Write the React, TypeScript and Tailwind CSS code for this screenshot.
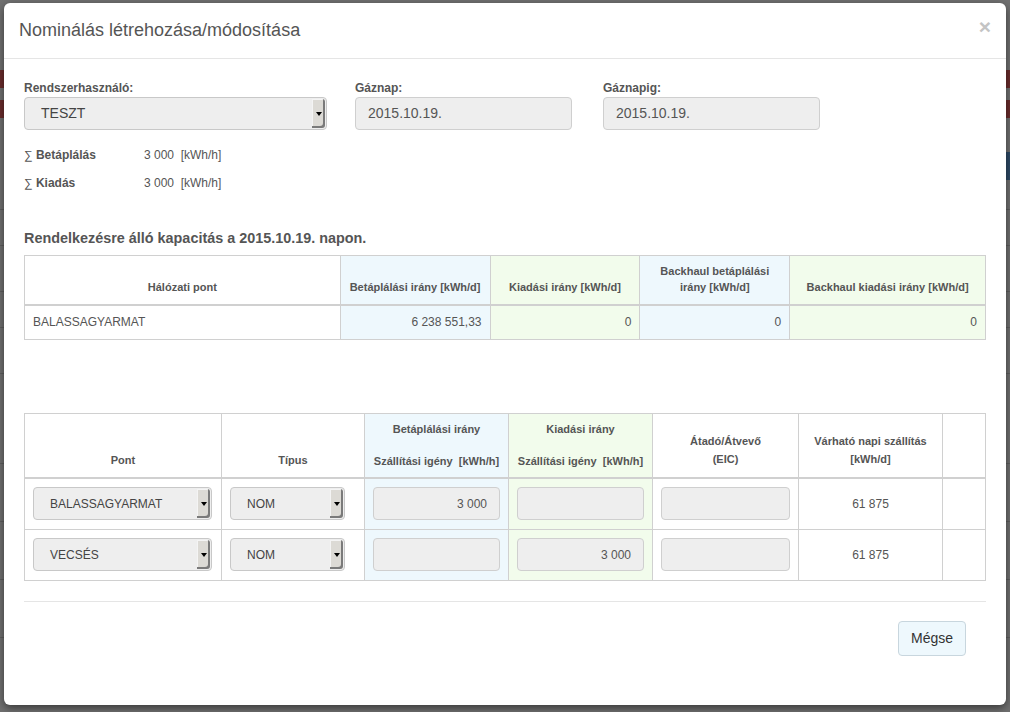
import React from "react";

const font = { fontFamily: '"Liberation Sans", Arial, sans-serif' };

const Arrow = () => (
  <span className="my-[1px] mr-[1px] flex w-[13px] items-center justify-center rounded-r-[3px] bg-[#dcdad5] shadow-[inset_-2px_-2px_0_#7a7a7a,inset_1px_1px_0_#f4f4f4]">
    <span className="h-0 w-0 border-x-[3px] border-t-[4px] border-x-transparent border-t-black" />
  </span>
);

const Select = ({ value, className, big }: { value: string; className: string; big?: boolean }) => (
  <div className={`flex h-[33px] items-stretch rounded-[4px] border border-[#c8c8c8] bg-[#eee] ${className}`}>
    <span className={`flex flex-1 items-center pl-4 text-[#444] ${big ? "text-[14px]" : "text-[12px]"}`}>{value}</span>
    <Arrow />
  </div>
);

const Input = ({ value, className }: { value?: string; className: string }) => (
  <div className={`flex h-[33px] items-center justify-end rounded-[4px] border border-[#cfcfcf] bg-[#eee] pr-3 text-[12px] text-[#555] ${className}`}>
    {value}
  </div>
);

const blue = "bg-[#eef8fd]";
const green = "bg-[#f2fcec]";
const cell = "border border-[#d0d0d0]";

const App = () => {
  const rows = [
    { pont: "BALASSAGYARMAT", be: "3 000", ki: "" },
    { pont: "VECSÉS", be: "", ki: "3 000" },
  ];

  return (
    <div className="relative h-[712px] w-[1010px] overflow-hidden bg-[#707070]" style={font}>
      {/* dimmed page behind the dialog */}
      <div className="flex flex-col">
        <div className="h-[70px]" />
        <div className="h-[18px] bg-[#6a2c2c]" />
        <div className="h-[12px]" />
        <div className="h-[18px] bg-[#6a2c2c]" />
        <div className="h-[34px]" />
        <div className="ml-auto h-[28px] w-[40px] bg-[#2e4a66]" />
        <div className="h-[30px] border-b border-[#5e5e5e]" />
        <div className="h-[36px] border-b border-[#5e5e5e]" />
        <div className="h-[46px] border-b border-[#5e5e5e]" />
        <div className="h-[36px] border-b border-[#5e5e5e]" />
        <div className="h-[46px] border-b border-[#5e5e5e]" />
        <div className="h-[90px] border-b border-[#5e5e5e]" />
        <div className="h-[58px] border-b border-[#5e5e5e]" />
        <div className="h-[58px] border-b border-[#5e5e5e]" />
        <div className="h-[58px] border-b border-[#5e5e5e]" />
      </div>

      {/* dialog */}
      <div className="absolute left-[4px] top-[3px] flex h-[702px] w-[1002px] flex-col rounded-[6px] bg-white shadow-[0_3px_9px_rgba(0,0,0,0.5)]">
        <div className="flex h-[56px] items-center justify-between border-b border-[#e5e5e5] pl-[15px] pr-[15px]">
          <h4 className="text-[18px] text-[#555]">Nominálás létrehozása/módosítása</h4>
          <span className="mb-[8px] text-[21px] font-bold leading-none text-[#c4c4c4]">×</span>
        </div>

        <div className="flex flex-1 flex-col px-[20px] pt-[21px]">
          <div className="flex">
            <div className="w-[303px]">
              <div className="mb-[1px] text-[12px] font-bold leading-[16px] text-[#555]">Rendszerhasználó:</div>
              <Select value="TESZT" className="w-[303px]" big />
            </div>
            <div className="ml-[28px] w-[217px]">
              <div className="mb-[1px] text-[12px] font-bold leading-[16px] text-[#555]">Gáznap:</div>
              <div className="flex h-[33px] items-center rounded-[4px] border border-[#cfcfcf] bg-[#eee] pl-3 text-[14px] text-[#555]">2015.10.19.</div>
            </div>
            <div className="ml-[31px] w-[217px]">
              <div className="mb-[1px] text-[12px] font-bold leading-[16px] text-[#555]">Gáznapig:</div>
              <div className="flex h-[33px] items-center rounded-[4px] border border-[#cfcfcf] bg-[#eee] pl-3 text-[14px] text-[#555]">2015.10.19.</div>
            </div>
          </div>

          <div className="mt-[17px] flex h-[16px] items-center text-[12px] text-[#555]">
            <span className="w-[120px] font-bold"><span className="font-normal">∑</span> Betáplálás</span>
            <span>3 000&nbsp;&nbsp;[kWh/h]</span>
          </div>
          <div className="mt-[12px] flex h-[16px] items-center text-[12px] text-[#555]">
            <span className="w-[120px] font-bold"><span className="font-normal">∑</span> Kiadás</span>
            <span>3 000&nbsp;&nbsp;[kWh/h]</span>
          </div>

          <h4 className="mt-[37px] text-[14.4px] font-bold text-[#555]">Rendelkezésre álló kapacitás a 2015.10.19. napon.</h4>

          <table className="mt-[5px] w-[962px] border-collapse text-[11px] text-[#555]">
            <thead>
              <tr className="h-[50px] border-b-2 border-[#d0d0d0]">
                <th className={`${cell} w-[316px] px-2 pb-[9px] align-bottom`}>Hálózati pont</th>
                <th className={`${cell} ${blue} w-[150px] px-2 pb-[9px] align-bottom`}>Betáplálási irány [kWh/d]</th>
                <th className={`${cell} ${green} w-[150px] px-2 pb-[9px] align-bottom`}>Kiadási irány [kWh/d]</th>
                <th className={`${cell} ${blue} w-[150px] px-2 pb-[9px] align-bottom leading-[16px]`}>Backhaul betáplálási irány [kWh/d]</th>
                <th className={`${cell} ${green} w-[196px] px-2 pb-[9px] align-bottom`}>Backhaul kiadási irány [kWh/d]</th>
              </tr>
            </thead>
            <tbody className="text-[12px]">
              <tr className="h-[34px]">
                <td className={`${cell} px-2`}>BALASSAGYARMAT</td>
                <td className={`${cell} ${blue} px-2 text-right`}>6 238 551,33</td>
                <td className={`${cell} ${green} px-2 text-right`}>0</td>
                <td className={`${cell} ${blue} px-2 text-right`}>0</td>
                <td className={`${cell} ${green} px-2 text-right`}>0</td>
              </tr>
            </tbody>
          </table>

          <table className="mt-[73px] w-[962px] border-collapse text-[11px] text-[#555]">
            <thead>
              <tr className="h-[65px] border-b-2 border-[#d0d0d0]">
                <th className={`${cell} w-[197px] px-2 pb-[9px] align-bottom`}>Pont</th>
                <th className={`${cell} w-[143px] px-2 pb-[9px] align-bottom`}>Típus</th>
                <th className={`${cell} ${blue} w-[144px] px-1 pb-[8px] align-bottom`}>
                  <div>Betáplálási irány</div>
                  <div className="mt-[15px]">Szállítási igény&nbsp;&nbsp;[kWh/h]</div>
                </th>
                <th className={`${cell} ${green} w-[144px] px-1 pb-[8px] align-bottom`}>
                  <div>Kiadási irány</div>
                  <div className="mt-[15px]">Szállítási igény&nbsp;&nbsp;[kWh/h]</div>
                </th>
                <th className={`${cell} w-[146px] px-2 pb-[9px] align-bottom leading-[18px]`}>
                  <div>Átadó/Átvevő</div>
                  <div>(EIC)</div>
                </th>
                <th className={`${cell} w-[144px] px-2 pb-[9px] align-bottom leading-[18px]`}>
                  <div>Várható napi szállítás</div>
                  <div>[kWh/d]</div>
                </th>
                <th className={`${cell} w-[43px]`} />
              </tr>
            </thead>
            <tbody className="text-[12px]">
              {rows.map((r) => (
                <tr key={r.pont} className="h-[51px]">
                  <td className={`${cell} px-2`}>
                    <Select value={r.pont} className="w-[179px]" />
                  </td>
                  <td className={`${cell} px-2`}>
                    <Select value="NOM" className="w-[115px]" />
                  </td>
                  <td className={`${cell} ${blue} px-2`}>
                    <Input value={r.be} className="w-[127px]" />
                  </td>
                  <td className={`${cell} ${green} px-2`}>
                    <Input value={r.ki} className="w-[127px]" />
                  </td>
                  <td className={`${cell} px-2`}>
                    <Input className="w-[129px]" />
                  </td>
                  <td className={`${cell} px-2 text-center`}>61 875</td>
                  <td className={cell} />
                </tr>
              ))}
            </tbody>
          </table>

          <div className="mt-[20px] h-px w-[962px] bg-[#e5e5e5]" />

          <div className="mt-[19px] flex w-[942px] justify-end">
            <button className="h-[35px] rounded-[4px] border border-[#c8d6de] bg-[#eef8fd] px-[12px] text-[14px] text-[#333]">
              Mégse
            </button>
          </div>
        </div>
      </div>
    </div>
  );
};

export default App;
